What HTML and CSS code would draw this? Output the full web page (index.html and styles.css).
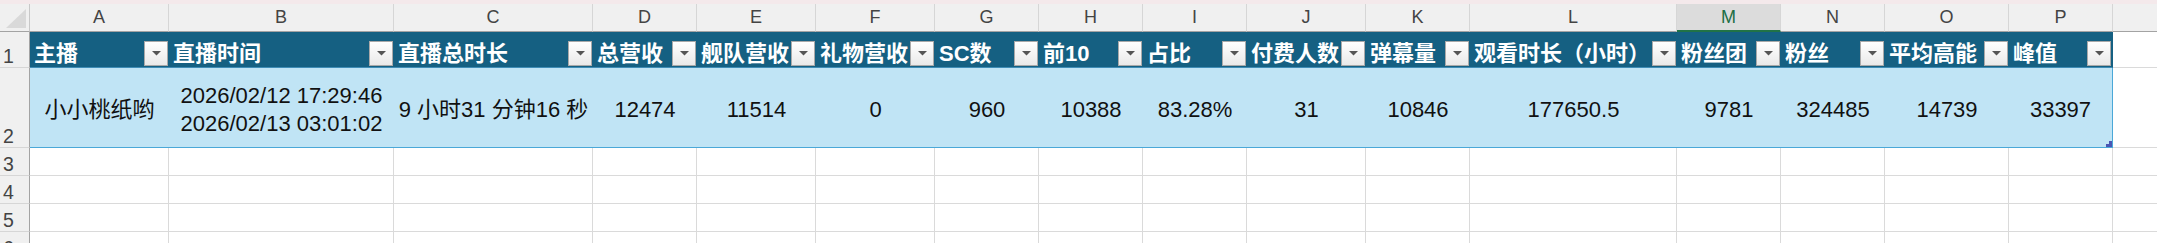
FILE: index.html
```html
<!DOCTYPE html>
<html lang="zh-CN">
<head>
<meta charset="utf-8">
<title>Sheet</title>
<link rel="stylesheet" href="styles.css">
</head>
<body>
<div class="topbar"></div>
<div class="sheet">
  <!-- column headers -->
  <div class="corner"><span class="corner-tri"></span></div>
  <div class="colhead">A</div>
  <div class="colhead">B</div>
  <div class="colhead">C</div>
  <div class="colhead">D</div>
  <div class="colhead">E</div>
  <div class="colhead">F</div>
  <div class="colhead">G</div>
  <div class="colhead">H</div>
  <div class="colhead">I</div>
  <div class="colhead">J</div>
  <div class="colhead">K</div>
  <div class="colhead">L</div>
  <div class="colhead selected">M</div>
  <div class="colhead">N</div>
  <div class="colhead">O</div>
  <div class="colhead">P</div>
  <div class="colhead"></div>

  <!-- row 1 -->
  <div class="rownum">1</div>
  <div class="th"><span class="tht">主播</span><span class="fbtn"><svg width="9" height="5" viewBox="0 0 9 5"><polygon points="0,0 9,0 4.5,4.5" fill="#555"/></svg></span></div>
  <div class="th"><span class="tht">直播时间</span><span class="fbtn"><svg width="9" height="5" viewBox="0 0 9 5"><polygon points="0,0 9,0 4.5,4.5" fill="#555"/></svg></span></div>
  <div class="th"><span class="tht">直播总时长</span><span class="fbtn"><svg width="9" height="5" viewBox="0 0 9 5"><polygon points="0,0 9,0 4.5,4.5" fill="#555"/></svg></span></div>
  <div class="th"><span class="tht">总营收</span><span class="fbtn"><svg width="9" height="5" viewBox="0 0 9 5"><polygon points="0,0 9,0 4.5,4.5" fill="#555"/></svg></span></div>
  <div class="th"><span class="tht">舰队营收</span><span class="fbtn"><svg width="9" height="5" viewBox="0 0 9 5"><polygon points="0,0 9,0 4.5,4.5" fill="#555"/></svg></span></div>
  <div class="th"><span class="tht">礼物营收</span><span class="fbtn"><svg width="9" height="5" viewBox="0 0 9 5"><polygon points="0,0 9,0 4.5,4.5" fill="#555"/></svg></span></div>
  <div class="th"><span class="tht">SC数</span><span class="fbtn"><svg width="9" height="5" viewBox="0 0 9 5"><polygon points="0,0 9,0 4.5,4.5" fill="#555"/></svg></span></div>
  <div class="th"><span class="tht">前10</span><span class="fbtn"><svg width="9" height="5" viewBox="0 0 9 5"><polygon points="0,0 9,0 4.5,4.5" fill="#555"/></svg></span></div>
  <div class="th"><span class="tht">占比</span><span class="fbtn"><svg width="9" height="5" viewBox="0 0 9 5"><polygon points="0,0 9,0 4.5,4.5" fill="#555"/></svg></span></div>
  <div class="th"><span class="tht">付费人数</span><span class="fbtn"><svg width="9" height="5" viewBox="0 0 9 5"><polygon points="0,0 9,0 4.5,4.5" fill="#555"/></svg></span></div>
  <div class="th"><span class="tht">弹幕量</span><span class="fbtn"><svg width="9" height="5" viewBox="0 0 9 5"><polygon points="0,0 9,0 4.5,4.5" fill="#555"/></svg></span></div>
  <div class="th"><span class="tht">观看时长（小时）</span><span class="fbtn"><svg width="9" height="5" viewBox="0 0 9 5"><polygon points="0,0 9,0 4.5,4.5" fill="#555"/></svg></span></div>
  <div class="th"><span class="tht">粉丝团</span><span class="fbtn"><svg width="9" height="5" viewBox="0 0 9 5"><polygon points="0,0 9,0 4.5,4.5" fill="#555"/></svg></span></div>
  <div class="th"><span class="tht">粉丝</span><span class="fbtn"><svg width="9" height="5" viewBox="0 0 9 5"><polygon points="0,0 9,0 4.5,4.5" fill="#555"/></svg></span></div>
  <div class="th"><span class="tht">平均高能</span><span class="fbtn"><svg width="9" height="5" viewBox="0 0 9 5"><polygon points="0,0 9,0 4.5,4.5" fill="#555"/></svg></span></div>
  <div class="th last"><span class="tht">峰值</span><span class="fbtn"><svg width="9" height="5" viewBox="0 0 9 5"><polygon points="0,0 9,0 4.5,4.5" fill="#555"/></svg></span></div>
  <div class="cell"></div>

  <!-- row 2 -->
  <div class="rownum">2</div>
  <div class="td">小小桃纸哟</div>
  <div class="td"><span>2026/02/12 17:29:46<br>2026/02/13 03:01:02</span></div>
  <div class="td">9 小时31 分钟16 秒</div>
  <div class="td">12474</div>
  <div class="td">11514</div>
  <div class="td">0</div>
  <div class="td">960</div>
  <div class="td">10388</div>
  <div class="td">83.28%</div>
  <div class="td">31</div>
  <div class="td">10846</div>
  <div class="td">177650.5</div>
  <div class="td">9781</div>
  <div class="td">324485</div>
  <div class="td">14739</div>
  <div class="td last">33397<span class="handle"><svg width="6" height="6" viewBox="0 0 6 6"><path d="M3 0H6V6H0V3H3Z" fill="#4a56b4"/></svg></span></div>
  <div class="cell"></div>

  <!-- rows 3-6 -->
  <div class="rownum">3</div>
  <div class="cell"></div><div class="cell"></div><div class="cell"></div><div class="cell"></div><div class="cell"></div><div class="cell"></div><div class="cell"></div><div class="cell"></div><div class="cell"></div><div class="cell"></div><div class="cell"></div><div class="cell"></div><div class="cell"></div><div class="cell"></div><div class="cell"></div><div class="cell"></div><div class="cell"></div>
  <div class="rownum">4</div>
  <div class="cell"></div><div class="cell"></div><div class="cell"></div><div class="cell"></div><div class="cell"></div><div class="cell"></div><div class="cell"></div><div class="cell"></div><div class="cell"></div><div class="cell"></div><div class="cell"></div><div class="cell"></div><div class="cell"></div><div class="cell"></div><div class="cell"></div><div class="cell"></div><div class="cell"></div>
  <div class="rownum">5</div>
  <div class="cell"></div><div class="cell"></div><div class="cell"></div><div class="cell"></div><div class="cell"></div><div class="cell"></div><div class="cell"></div><div class="cell"></div><div class="cell"></div><div class="cell"></div><div class="cell"></div><div class="cell"></div><div class="cell"></div><div class="cell"></div><div class="cell"></div><div class="cell"></div><div class="cell"></div>
  <div class="rownum">6</div>
  <div class="cell"></div><div class="cell"></div><div class="cell"></div><div class="cell"></div><div class="cell"></div><div class="cell"></div><div class="cell"></div><div class="cell"></div><div class="cell"></div><div class="cell"></div><div class="cell"></div><div class="cell"></div><div class="cell"></div><div class="cell"></div><div class="cell"></div><div class="cell"></div><div class="cell"></div>
</div>
</body>
</html>
```

FILE: styles.css
```css
* { box-sizing: border-box; }

html, body {
  margin: 0;
  padding: 0;
  background: #ffffff;
  overflow: hidden;
  width: 2157px;
  height: 243px;
}

body {
  font-family: "Liberation Sans", "Noto Sans CJK SC", sans-serif;
  color: #111;
}

.topbar {
  height: 4px;
  background: #f4e9eb;
}

.sheet {
  display: grid;
  grid-template-columns: 30px 139px 225px 199px 104px 119px 119px 104px 104px 104px 119px 104px 207px 104px 104px 124px 104px 104px;
  grid-template-rows: 28px 36px 80px 28px 28px 28px 28px;
  width: 2217px;
}

.corner {
  position: relative;
  background: #f0f0f0;
  border-right: 1px solid #c8c8c8;
  border-bottom: 1px solid #a3a3a3;
}

.corner-tri {
  position: absolute;
  right: 3px;
  bottom: 3px;
  width: 0;
  height: 0;
  border-left: 20px solid transparent;
  border-bottom: 19px solid #d9d9d9;
}

.colhead {
  display: flex;
  align-items: center;
  justify-content: center;
  background: #f0f0f0;
  border-right: 1px solid #d6d6d6;
  border-bottom: 1px solid #a3a3a3;
  font-size: 18px;
  color: #444;
}

.colhead.selected {
  background: #dcdcdc;
  color: #1d6e45;
  border-bottom: 2px solid #217346;
}

.rownum {
  display: flex;
  align-items: flex-end;
  padding-left: 3px;
  padding-bottom: 1px;
  background: #f0f0f0;
  border-right: 1px solid #a3a3a3;
  border-bottom: 1px solid #d6d6d6;
  font-size: 19.5px;
  line-height: 1;
  color: #444;
}

.th {
  display: flex;
  align-items: center;
  justify-content: space-between;
  background: #156082;
  border-bottom: 1px solid #3f8db6;
  padding-left: 4px;
  padding-right: 1px;
  white-space: nowrap;
  overflow: hidden;
}

.th.last {
  border-right: 1px solid #156082;
}

.tht {
  color: #ffffff;
  font-weight: bold;
  font-size: 22px;
  padding-top: 3px;
}

.fbtn {
  flex: none;
  align-self: flex-end;
  display: flex;
  align-items: center;
  justify-content: center;
  width: 24px;
  height: 25px;
  margin-bottom: 1px;
  border: 1px solid #a9a9a9;
  background: linear-gradient(#ffffff, #e9e9e9);
}

.fbtn svg { display: block; }

.td {
  position: relative;
  display: flex;
  align-items: center;
  justify-content: center;
  text-align: center;
  background: #c0e4f5;
  border-bottom: 1px solid #4aa8d8;
  padding-top: 5px;
  font-size: 22px;
  line-height: 28px;
  color: #111;
  white-space: nowrap;
}

.td.last {
  border-right: 1px solid #4aa8d8;
}

.handle {
  position: absolute;
  right: 0;
  bottom: 0;
  width: 6px;
  height: 6px;
}

.handle svg { display: block; }

.cell {
  background: #ffffff;
  border-right: 1px solid #dadada;
  border-bottom: 1px solid #dadada;
}
```
